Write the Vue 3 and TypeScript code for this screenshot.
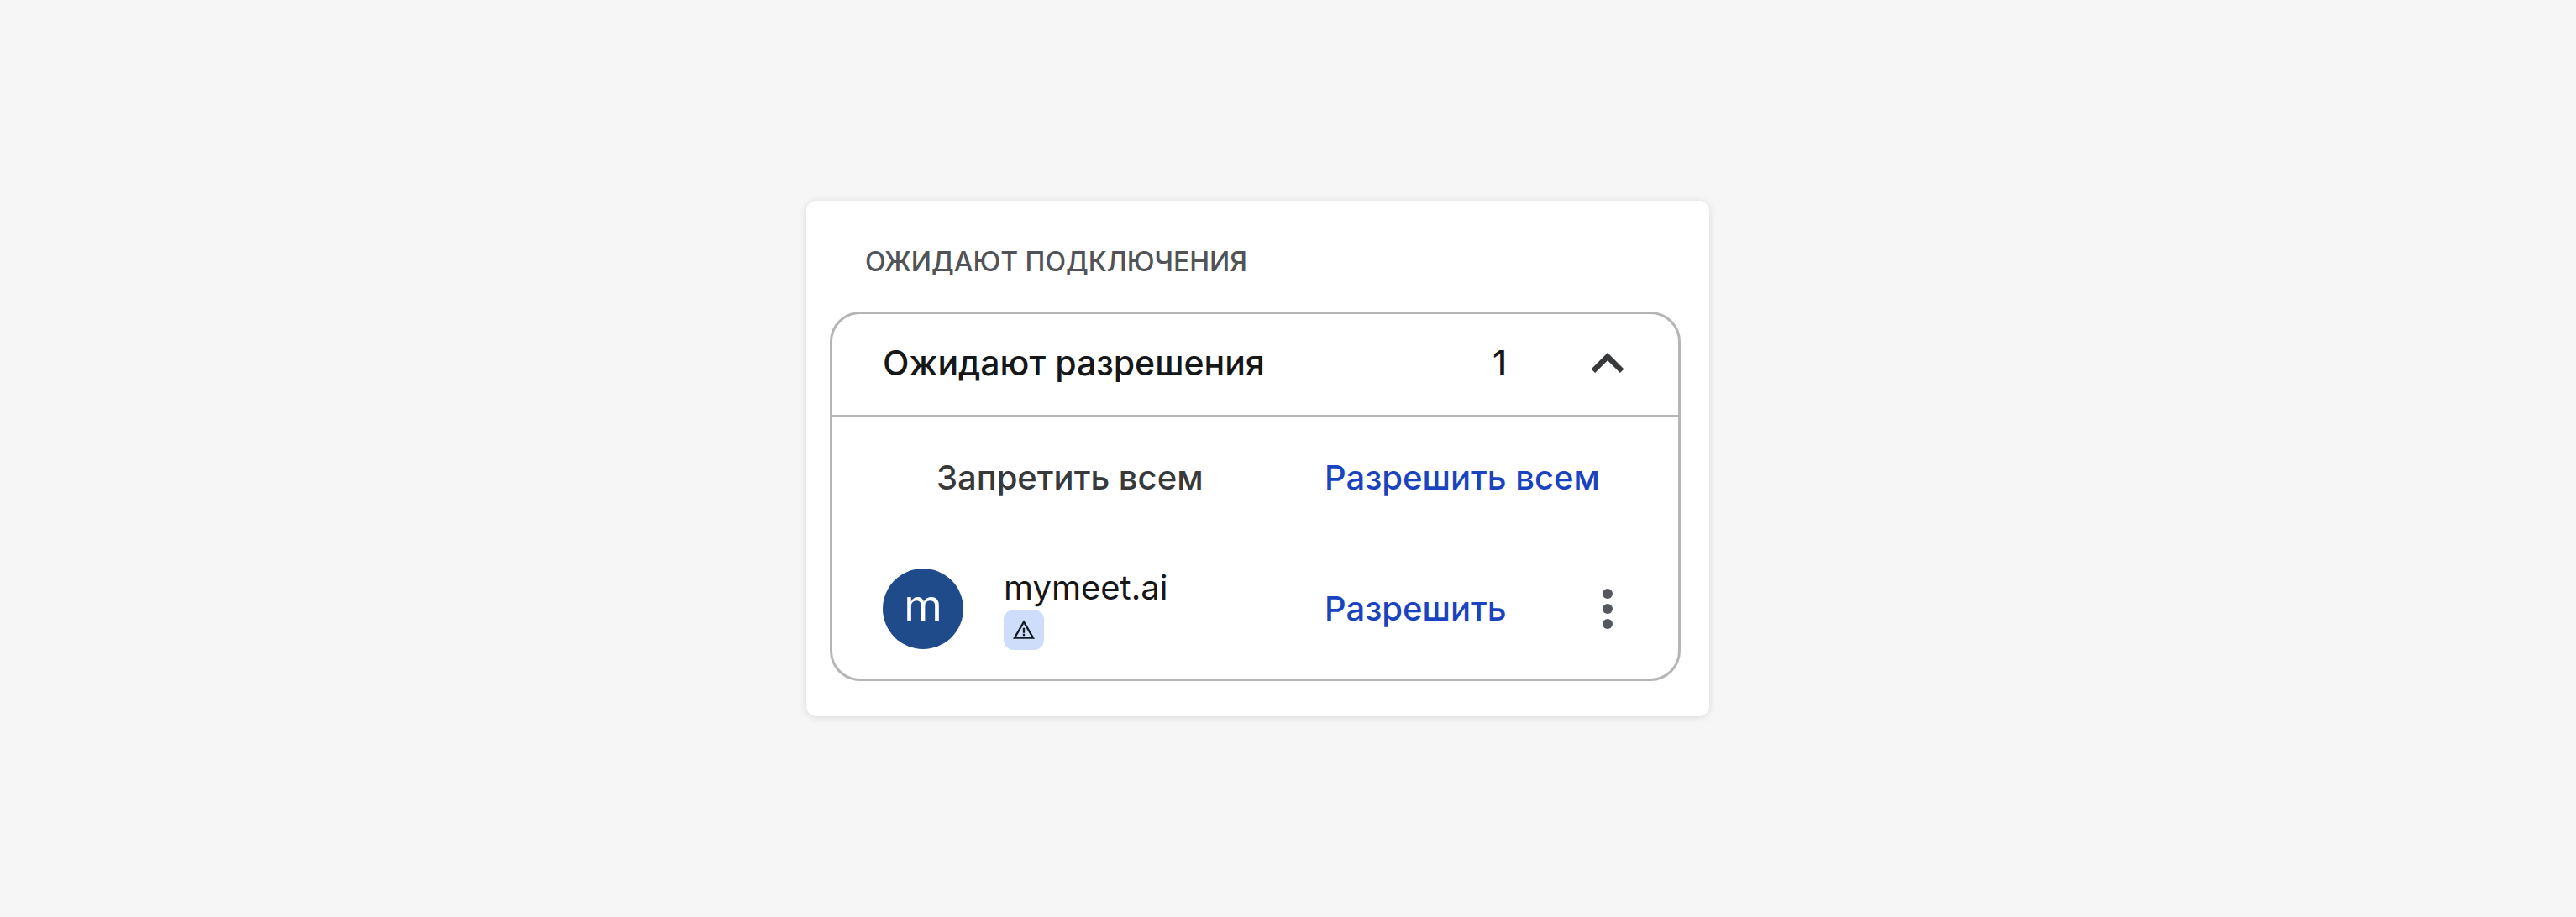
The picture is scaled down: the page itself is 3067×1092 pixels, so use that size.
<script setup lang="ts">
import { computed, ref } from 'vue'

interface Guest {
  id: number
  name: string
  unverified: boolean
}

const guests = ref<Guest[]>([{ id: 1, name: 'mymeet.ai', unverified: true }])
const expanded = ref(true)
const count = computed(() => guests.value.length)

function dismissAll(): void {
  guests.value = []
}

function admit(id: number): void {
  guests.value = guests.value.filter((guest) => guest.id !== id)
}
</script>

<template>
  <main class="page">
    <section class="card">
      <h2 class="card-title">Ожидают подключения</h2>
      <div class="panel">
        <button
          class="panel-header"
          type="button"
          :aria-expanded="expanded"
          @click="expanded = !expanded"
        >
          <span class="panel-title">Ожидают разрешения</span>
          <span class="panel-count">{{ count }}</span>
          <svg class="chevron" :class="{ closed: !expanded }" viewBox="6 8 12 7.4" aria-hidden="true">
            <path d="M12 8l-6 6 1.41 1.41L12 10.83l4.59 4.58L18 14z" />
          </svg>
        </button>
        <template v-if="expanded">
          <div class="row bulk">
            <button class="action deny" type="button" @click="dismissAll">Запретить всем</button>
            <div class="side">
              <button class="action" type="button" @click="dismissAll">Разрешить всем</button>
            </div>
          </div>
          <div v-for="guest in guests" :key="guest.id" class="row guest">
            <div class="person">
              <span class="avatar">{{ guest.name.charAt(0) }}</span>
              <div class="identity">
                <span class="name">{{ guest.name }}</span>
                <span v-if="guest.unverified" class="badge">
                  <svg class="warning" viewBox="1 2 22 19" aria-hidden="true">
                    <path
                      d="M1 21h22L12 2 1 21zm3.47-2L12 5.99 19.53 19H4.47zM11 16h2v2h-2zm0-6h2v5h-2z"
                    />
                  </svg>
                </span>
              </div>
            </div>
            <div class="side">
              <button class="action" type="button" @click="admit(guest.id)">Разрешить</button>
              <button class="more" type="button" aria-label="Ещё">
                <svg class="dots" viewBox="0 0 40 48" aria-hidden="true">
                  <circle cx="20" cy="6" r="6" />
                  <circle cx="20" cy="24" r="6" />
                  <circle cx="20" cy="42" r="6" />
                </svg>
              </button>
            </div>
          </div>
        </template>
      </div>
    </section>
  </main>
</template>

<style>
body {
  margin: 0;
  background: #f6f6f6;
}
</style>

<style scoped>
.page {
  box-sizing: border-box;
  display: flex;
  align-items: center;
  justify-content: center;
  min-height: 100vh;
  padding-right: 72px;
  font-family: Inter, 'Noto Sans', sans-serif;
  font-size: 40px;
  line-height: 48px;
  color: #161719;
}

button {
  margin: 0;
  padding: 0;
  border: 0;
  background: none;
  color: inherit;
  font: inherit;
  text-align: left;
  cursor: pointer;
}

.card {
  box-sizing: border-box;
  width: 100%;
  max-width: 1075px;
  padding: 49px 34px 42px 28px;
  border-radius: 12px;
  background: #fff;
  box-shadow: 0 1px 10px rgba(0, 0, 0, 0.12);
}

.card-title {
  margin: 0 0 35px;
  padding-left: 42px;
  color: #505357;
  font-size: 32px;
  font-weight: 500;
  line-height: 48px;
  text-transform: uppercase;
}

.panel {
  border: 3px solid #b5b5b5;
  border-radius: 36px;
}

.panel-header {
  box-sizing: border-box;
  display: flex;
  align-items: center;
  width: 100%;
  height: 123px;
  padding: 0 64px 4px 60px;
  border-bottom: 3px solid #b5b5b5;
  font-size: 41px;
  font-weight: 500;
}

.panel-title {
  flex: 1;
}

.panel-count {
  margin-right: 100px;
}

.chevron {
  width: 40px;
  height: 24px;
  fill: #38393b;
}

.chevron.closed {
  transform: rotate(180deg);
}

.row {
  display: grid;
  grid-template-columns: 1fr 357px;
  align-items: center;
  padding: 0 64px 0 60px;
}

.bulk {
  height: 144px;
}

.guest {
  height: 167px;
}

.side {
  display: flex;
  align-items: center;
  justify-content: space-between;
}

.action {
  color: #1a43bf;
  font-weight: 500;
  white-space: nowrap;
}

.deny {
  padding-left: 64px;
  color: #38393b;
}

.person {
  display: flex;
  align-items: center;
  gap: 48px;
}

.avatar {
  box-sizing: border-box;
  display: flex;
  align-items: center;
  justify-content: center;
  width: 96px;
  height: 96px;
  padding-bottom: 8px;
  border-radius: 50%;
  background: #1f4b8a;
  color: #fff;
  font-size: 52px;
}

.identity {
  display: flex;
  flex-direction: column;
  align-items: flex-start;
  gap: 2px;
}

.badge {
  display: flex;
  align-items: center;
  justify-content: center;
  width: 48px;
  height: 48px;
  border-radius: 12px;
  background: #cdddfa;
}

.warning {
  width: 26px;
  height: 23px;
  fill: #161b26;
}

.more {
  display: flex;
}

.dots {
  width: 40px;
  height: 48px;
  fill: #54575c;
}
</style>
